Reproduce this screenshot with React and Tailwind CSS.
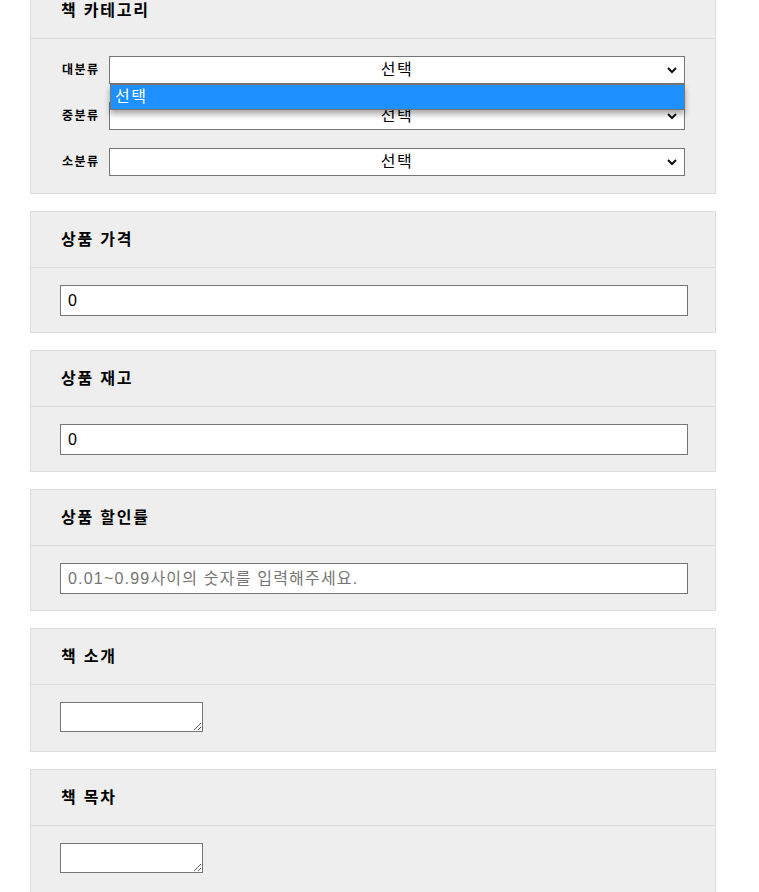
import {useState} from 'react'

const font = { fontFamily: '"Liberation Sans", "Noto Sans CJK KR", sans-serif' }

const Chevron = () => (
  <svg className="absolute right-[7px] top-1/2 -translate-y-1/2 pointer-events-none" width="12" height="8" viewBox="0 0 12 8">
    <path d="M2 2 L6 6 L10 2" fill="none" stroke="#111" strokeWidth="2" />
  </svg>
)

const Card = ({title, children, bodyClass = ''}) => (
  <div className="bg-[#eeeeee] border border-[#dcdcdc] w-[686px]">
    <div className="h-[56px] border-b border-[#dcdcdc] flex items-center pl-[30px]">
      <h2 className="text-[16px] font-bold text-black tracking-[1.8px]">{title}</h2>
    </div>
    <div className={`pl-[29px] pt-[17px] pb-[16px] ${bodyClass}`}>{children}</div>
  </div>
)

const SelectRow = ({label, open}) => (
  <div className="flex items-center">
    <span className="w-[48px] pl-[1px] text-[12px] font-bold text-black tracking-[1.5px]">{label}</span>
    <div className="relative w-[576px] h-[28px]">
      <div className="w-full h-full bg-white border border-[#767676] flex items-center justify-center text-[16px] tracking-[1.5px] text-black">
        선택
      </div>
      <Chevron />
      {open && (
        <div className="absolute left-[1px] top-[28px] w-[575px] h-[26px] bg-[#1e90ff] border border-[#767676] shadow-[0_4px_6px_rgba(0,0,0,0.35)] z-10 flex items-center pl-[4px] text-[16px] tracking-[1.5px] text-white">
          선택
        </div>
      )}
    </div>
  </div>
)

const TextInput = ({value, placeholder}) => (
  <input
    type="text"
    defaultValue={value}
    placeholder={placeholder}
    className="w-[628px] h-[31px] bg-white border border-[#767676] px-[7px] text-[16px] text-black placeholder-[#757575] placeholder:tracking-[1.2px] outline-none"
  />
)

const Area = () => (
  <textarea className="block w-[143px] h-[30px] bg-white border border-[#767676] outline-none resize" />
)

export default function App() {
  const [open] = useState(true)
  return (
    <div className="bg-white min-h-screen overflow-hidden" style={font}>
      <div className="pl-[30px] flex flex-col gap-[17px] -mt-[18px]">
        <Card title="책 카테고리" bodyClass="flex flex-col gap-[18px] !pt-[17px] !pb-[17px] !pl-[30px]">
          <SelectRow label="대분류" open={open} />
          <SelectRow label="중분류" />
          <SelectRow label="소분류" />
        </Card>
        <Card title="상품 가격">
          <TextInput value="0" />
        </Card>
        <Card title="상품 재고">
          <TextInput value="0" />
        </Card>
        <Card title="상품 할인률">
          <TextInput placeholder="0.01~0.99사이의 숫자를 입력해주세요." />
        </Card>
        <Card title="책 소개" bodyClass="!pb-[19px]">
          <Area />
        </Card>
        <Card title="책 목차" bodyClass="!pb-[19px]">
          <Area />
        </Card>
      </div>
    </div>
  )
}
